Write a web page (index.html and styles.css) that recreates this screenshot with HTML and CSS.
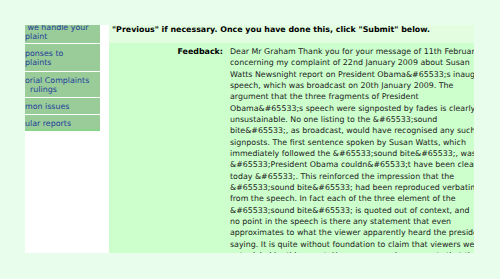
FILE: index.html
```html
<!DOCTYPE html>
<html lang="en">
<head>
    <meta charset="UTF-8">
    <meta name="viewport" content="width=device-width, initial-scale=1.0">
    <link rel="stylesheet" href="styles.css">
    <title>Complaint feedback</title>
</head>
<body>
    <div class="frame">
        <div class="sidebar">
            <ul class="nav">
                <li class="first">&nbsp;we handle your<br>plaint</li>
                <li class="tall">ponses to<br>plaints</li>
                <li>orial Complaints<br>&nbsp;&nbsp;rulings</li>
                <li>mon issues</li>
                <li class="last">ular reports</li>
            </ul>
        </div>
        <div class="main">
            <div class="intro">"Previous" if necessary. Once you have done this, click "Submit" below.</div>
            <div class="field">
                <div class="label">Feedback:</div>
                <div class="value">
                    Dear Mr Graham Thank you for your message of 11th February 2009<br>
                    concerning my complaint of 22nd January 2009 about Susan<br>
                    Watts Newsnight report on President Obama&amp;#65533;s inaugural<br>
                    speech, which was broadcast on 20th January 2009. The<br>
                    argument that the three fragments of President<br>
                    Obama&amp;#65533;s speech were signposted by fades is clearly<br>
                    unsustainable. No one listing to the &amp;#65533;sound<br>
                    bite&amp;#65533;, as broadcast, would have recognised any such<br>
                    signposts. The first sentence spoken by Susan Watts, which<br>
                    immediately followed the &amp;#65533;sound bite&amp;#65533;, was<br>
                    &amp;#65533;President Obama couldn&amp;#65533;t have been clearer<br>
                    today &amp;#65533;. This reinforced the impression that the<br>
                    &amp;#65533;sound bite&amp;#65533; had been reproduced verbatim<br>
                    from the speech. In fact each of the three element of the<br>
                    &amp;#65533;sound bite&amp;#65533; is quoted out of context, and<br>
                    no point in the speech is there any statement that even<br>
                    approximates to what the viewer apparently heard the president<br>
                    saying. It is quite without foundation to claim that viewers were<br>
                    not misled by this report. Your response also suggests that the
                </div>
            </div>
        </div>
    </div>
</body>
</html>
```

FILE: styles.css
```css
body {
    margin: 0;
    background-color: #e8fdec;
    font-family: "DejaVu Sans", Verdana, sans-serif;
    font-size: 7.9px;
}

.frame {
    display: flex;
    margin: 25px 0 0 25px;
    width: 449px;
    height: 228px;
    overflow: hidden;
}

.sidebar {
    width: 84px;
    background-color: #fff;
    flex-shrink: 0;
}

.nav {
    list-style: none;
    margin: -6px 0 0 0;
    padding: 0;
    width: 75px;
}

.nav li {
    background-color: #99cc99;
    color: #1f3d9c;
    line-height: 9px;
    padding: 4px 0 3px 0;
    margin-bottom: 1px;
    white-space: nowrap;
    overflow: hidden;
}

.nav li.first {
    padding-bottom: 2px;
}

.nav li.tall {
    padding: 5px 0 4px 0;
}

.nav li.last {
    padding-bottom: 1px;
    border-bottom: 2px solid #88d488;
}

.main {
    flex: 1;
    background-color: #ccffcc;
    overflow: hidden;
}

.intro {
    background-color: #e2fde0;
    font-weight: bold;
    color: #000;
    line-height: 10px;
    padding: 0 0 8px 3px;
    white-space: nowrap;
}

.field {
    display: grid;
    grid-template-columns: 114px auto;
    column-gap: 7px;
    padding-top: 3px;
    line-height: 11.33px;
    color: #222;
}

.label {
    font-weight: bold;
    text-align: right;
    color: #000;
}

.value {
    white-space: nowrap;
}
```
